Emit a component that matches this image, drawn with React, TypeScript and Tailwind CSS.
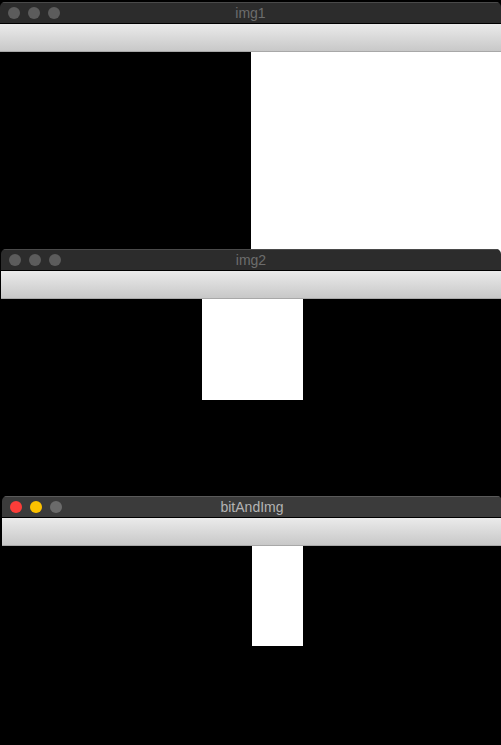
import type React from "react"

function Lights({ active }: { active: boolean }) {
  const colors = active ? ["bg-[#fc3d39]", "bg-[#fdc200]", "bg-[#6b6b6b]"] : ["bg-[#5c5c5c]", "bg-[#5c5c5c]", "bg-[#5c5c5c]"]
  return (
    <div className="flex items-center gap-[8px]">
      {colors.map((c, i) => (
        <span key={i} className={`block h-[12px] w-[12px] rounded-full ${c}`} />
      ))}
    </div>
  )
}

function Window({
  title,
  active,
  contentHeight,
  className,
  children,
}: {
  title: string
  active?: boolean
  contentHeight: string
  className?: string
  children: React.ReactNode
}) {
  return (
    <div className={["relative w-[500px] overflow-hidden rounded-t-[5px]", className].join(" ")}>
      <div
        className={[
          "relative flex h-[22px] items-center border-t border-b border-b-black pl-[8px]",
          active ? "bg-[#3b3b3b] border-t-[#5a5a5a]" : "bg-[#2c2c2c] border-t-[#4a4a4a]",
        ].join(" ")}
      >
        <Lights active={!!active} />
        <span
          className={[
            "absolute inset-x-0 text-center text-[14px] leading-[20px] font-['Liberation_Sans',Arial,sans-serif]",
            active ? "text-[#b4b4b4]" : "text-[#6c6c6c]",
          ].join(" ")}
        >
          {title}
        </span>
      </div>
      <div className="h-[28px] border-b border-[#a8a8a8] bg-gradient-to-b from-[#ebebeb] to-[#c8c8c8]" />
      <div className={contentHeight}>{children}</div>
    </div>
  )
}

export default function App() {
  return (
    <div className="h-[745px] w-[501px] overflow-hidden bg-black pt-[2px]">
      <Window title="img1" contentHeight="h-[203px]" className="ml-0 !w-[501px]">
        <div className="flex h-full">
          <div className="h-full w-[251px] bg-black" />
          <div className="h-full flex-1 bg-white" />
        </div>
      </Window>
      <Window title="img2" contentHeight="h-[203px]" className="-mt-[6px] ml-[1px]">
        <div className="h-full bg-black pl-[201px]">
          <div className="h-[101px] w-[101px] bg-white" />
        </div>
      </Window>
      <Window title="bitAndImg" active contentHeight="h-[250px]" className="-mt-[6px] ml-[2px]">
        <div className="h-full bg-black pl-[250px]">
          <div className="h-[100px] w-[51px] bg-white" />
        </div>
      </Window>
    </div>
  )
}
